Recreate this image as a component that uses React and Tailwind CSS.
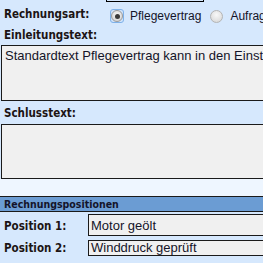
import React from 'react'

const label = "shrink-0 font-['DejaVu_Sans_Condensed','DejaVu_Sans',sans-serif] font-bold text-[11.5px] leading-[14px] text-[#1c1414]"

function Radio({ checked }) {
  if (checked) {
    return (
      <div className="w-[14px] h-[14px] rounded-[3px] border border-[#7fb2ea] bg-[#cfe3fb] flex items-center justify-center">
        <div className="w-[12px] h-[12px] rounded-full border border-[#9a9a9a] bg-[radial-gradient(circle_at_50%_35%,#f4f4f4,#cfcfcf)] flex items-center justify-center">
          <div className="w-[5px] h-[5px] rounded-full bg-[#3a3a3a]" />
        </div>
      </div>
    )
  }
  return (
    <div className="w-[13px] h-[13px] rounded-full border border-[#b4b4b4] bg-[radial-gradient(circle_at_50%_35%,#f8f8f8,#d4d4d4)]" />
  )
}

export default function App() {
  return (
    <div className="w-[263px] h-[263px] overflow-hidden bg-[#d6e8fd] font-['Liberation_Sans',Arial,sans-serif] text-[12px] text-[#141428]">
      <div className="ml-[106px] w-[98px] h-[2px] border-x border-b border-black" />

      {/* Rechnungsart */}
      <div className="flex items-start h-[14px] mt-[5px] pl-[4px] whitespace-nowrap">
        <span className={label + ' w-[106px]'}>Rechnungsart:</span>
        <div className="shrink-0 mt-[2px]"><Radio checked /></div>
        <span className="shrink-0 ml-[6px] mt-[2px] leading-[14px]">Pflegevertrag</span>
        <div className="shrink-0 ml-[9px] mt-[3px]"><Radio /></div>
        <span className="shrink-0 ml-[7px] mt-[2px] leading-[14px]">Aufrag</span>
      </div>

      <div className={label + ' mt-[7px] pl-[4px]'}>Einleitungstext:</div>
      <div className="mt-[3px] ml-[1px] w-[280px] h-[56px] border border-[#1a1a1a] bg-[#f0f0f0] px-[3px] pt-[2px] text-[13px] leading-[15px] whitespace-nowrap">
        Standardtext Pflegevertrag kann in den Einstellungen
      </div>

      <div className={label + ' mt-[5px] pl-[4px]'}>Schlusstext:</div>
      <div className="mt-[4px] ml-[1px] w-[280px] h-[55px] border border-[#1a1a1a] bg-[#f0f0f0]" />

      <div className="h-[17px] bg-[#eef6ff]" />
      <div className="h-[16px] border-y border-[#1a1a1a] bg-[#6b9cd3] pl-[4px] font-['DejaVu_Sans_Condensed','DejaVu_Sans',sans-serif] font-bold text-[10.5px] leading-[14px] text-[#14142a]">
        Rechnungspositionen
      </div>

      <div className="flex items-start mt-[2px] pl-[4px] whitespace-nowrap">
        <span className={label + ' w-[84px] mt-[5px]'}>Position 1:</span>
        <div className="shrink-0 w-[200px] h-[22px] border border-[#1a1a1a] bg-[#f0f0f0] px-[2px] pt-[3px] text-[13px] leading-[15px]">Motor geölt</div>
      </div>
      <div className="flex items-start mt-[4px] pl-[4px] whitespace-nowrap">
        <span className={label + ' w-[84px] mt-[1px]'}>Position 2:</span>
        <div className="shrink-0 w-[200px] h-[16px] border border-[#1a1a1a] bg-[#f0f0f0] px-[2px] text-[13px] leading-[14px]">Winddruck geprüft</div>
      </div>
    </div>
  )
}
